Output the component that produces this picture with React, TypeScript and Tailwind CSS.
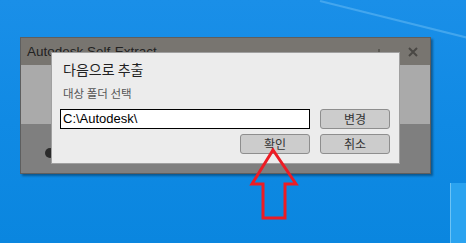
import React from "react";

export default function App() {
  const kr = { fontFamily: '"Noto Sans CJK KR", "Noto Sans", sans-serif' };
  return (
    <div className="relative w-[466px] h-[243px] overflow-hidden bg-[linear-gradient(180deg,#1a8fe8_0%,#108ae4_50%,#0a86df_100%)]">
      {/* light beams */}
      <div className="absolute left-[320px] top-[0px] w-[170px] h-[2px] bg-[#5fb6f2] rotate-[14deg] origin-left opacity-60" />
      <div className="absolute left-[450px] top-[183px] w-[30px] h-[80px] bg-[#2aa3f0] border-l border-[#6cc3f5]" />

      {/* background window */}
      <div className="absolute left-[20px] top-[37px] w-[411px] h-[137px] flex flex-col border border-[#5e5e5e] shadow-[2px_2px_2px_rgba(0,0,0,0.35)]">
        <div className="h-[27px] bg-[#787570] flex items-center justify-between pl-[6px] pr-[12px]">
          <span
            className="text-[13.5px] text-[#222] leading-none"
            style={{ fontFamily: '"Liberation Sans", Arial, sans-serif' }}
          >
            Autodesk Self-Extract
          </span>
          <div className="flex items-center gap-[28px]">
            <span className="w-[2px] h-[6px] bg-[#5a5852]" />
            <svg width="10" height="10" viewBox="0 0 10 10">
              <path d="M1 1 L9 9 M9 1 L1 9" stroke="#4a4844" strokeWidth="2" />
            </svg>
          </div>
        </div>
        <div className="h-[59px] bg-[#aaaaaa]" />
        <div className="flex-1 bg-[#7f7f7f] relative">
          <div className="absolute left-[24px] top-[24px] w-[10px] h-[10px] rounded-full bg-[#2b2b2b]" />
        </div>
      </div>

      {/* dialog */}
      <div className="absolute left-[51px] top-[52px] w-[349px] h-[112px] bg-[#ececec] border border-[#a0a0a0] flex flex-col">
        <div className="pl-[11px] pt-[8px] text-[14px] leading-[16px] text-[#222]" style={kr}>
          다음으로 추출
        </div>
        <div className="pl-[11px] pt-[9px] text-[11.5px] leading-[14px] text-[#555]" style={kr}>
          대상 폴더 선택
        </div>
        <div className="flex pl-[8px] pt-[9px] gap-[10px]">
          <div
            className="w-[250px] h-[20px] bg-white border border-black flex items-center pl-[2px] text-[13px] text-black"
            style={{ fontFamily: '"Liberation Sans", Arial, sans-serif' }}
          >
            C:\Autodesk\
          </div>
          <button
            className="w-[70px] h-[20px] bg-[#cccccc] border border-[#8e8e8e] rounded-[3px] text-[12px] leading-none text-[#333] flex items-center justify-center"
            style={kr}
          >
            변경
          </button>
        </div>
        <div className="flex justify-end pr-[9px] pt-[5px] gap-[10px]">
          <button
            className="w-[70px] h-[20px] bg-[#cccccc] border border-[#8e8e8e] rounded-[3px] text-[12px] leading-none text-[#333] flex items-center justify-center"
            style={kr}
          >
            확인
          </button>
          <button
            className="w-[70px] h-[20px] bg-[#cccccc] border border-[#8e8e8e] rounded-[3px] text-[12px] leading-none text-[#333] flex items-center justify-center"
            style={kr}
          >
            취소
          </button>
        </div>
      </div>

      {/* red arrow */}
      <svg className="absolute left-0 top-0" width="466" height="243" viewBox="0 0 466 243">
        <path
          d="M273 150 L296 184 L285 184 L285 218 L263 218 L263 184 L252 184 Z"
          fill="none"
          stroke="#ed1c24"
          strokeWidth="3"
          strokeLinejoin="miter"
        />
      </svg>
    </div>
  );
}
